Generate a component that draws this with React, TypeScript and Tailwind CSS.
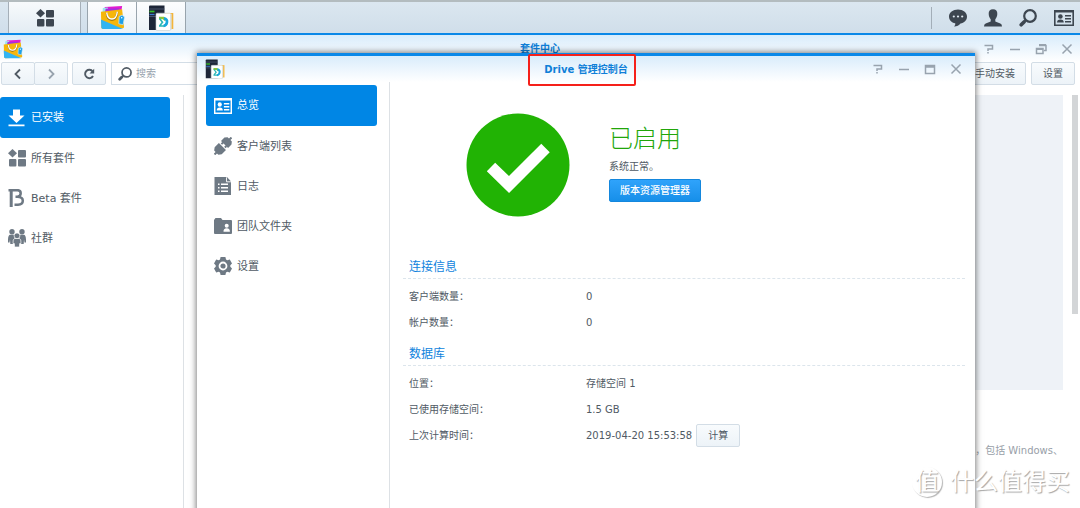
import type { ReactNode } from "react";

type IconProps = { className?: string };

const GridIcon = ({ className }: IconProps) => (
  <svg viewBox="0 0 18 18" className={className} fill="currentColor">
    <path d="M4.500 0 9 4.300 4.500 8.600 0 4.300z" />
    <rect x="10" y="1" width="8" height="7.400" rx="1" />
    <rect x="1" y="10" width="7.400" height="7.600" rx="1" />
    <rect x="10" y="10" width="8" height="7.600" rx="1" />
  </svg>
);

const BagIcon = ({ className }: IconProps) => (
  <svg viewBox="0 0 26 26" className={className}>
    <path d="M5 2 23 1 22 8 4 8z" fill="#e21bd0" />
    <path d="M3 3 8 2.500 9 8 2.500 8z" fill="#9be4ee" />
    <path d="M6 4 20 3.500 20 8 5 8z" fill="#a32fe0" />
    <path d="M1 7 23 4.500 25 22.500 Q25 24 23.500 24.200L3 25Q1.500 25 1.400 23.500z" fill="#f6b60c" />
    <path d="M1 15 24 25H3Q1.500 25 1.400 23.500z" fill="#32b4f2" />
    <path d="M7 8.500C8 18 17 18 18 7.500" fill="none" stroke="#8d6b10" strokeWidth="2" />
    <path d="M7 8C8 17 17 17 18 7" fill="none" stroke="#fff" strokeWidth="1.500" />
    <path d="m20 12 3-1.500 2.500 2-1.500 8-4.500-1z" fill="#1d9fe8" stroke="#c9efff" strokeWidth=".7" />
    <circle cx="22.600" cy="13.200" r=".8" fill="#fff" />
  </svg>
);

const DriveIcon = ({ className }: IconProps) => (
  <svg viewBox="0 0 26 26" className={className}>
    <path d="M1 1.500Q1 .5 2 .5H16.500V25H1z" fill="#1d2638" />
    <path d="M1 4H16.500M1 11.500H16.500" stroke="#54617a" strokeWidth=".8" />
    <path d="M1.500 6.500h5" stroke="#37c32b" strokeWidth="1.700" />
    <path d="M1.500 9.500h5" stroke="#3c7ccf" strokeWidth="1.200" />
    <path d="M17 8h8.300v16H17z" fill="#f3b53b" />
    <path d="M15 8.800h8.600V25H15z" fill="#dfe8e6" />
    <rect x="8" y="8.200" width="14.600" height="17.300" rx="1" fill="#fff" stroke="#c3cdd2" strokeWidth=".6" />
    <path d="M11 13h4.500l2 2" fill="none" stroke="#8cc63c" strokeWidth="2.600" />
    <path d="M16 13.200Q19.500 14 19 17.300T15.500 21" fill="none" stroke="#17a7dc" strokeWidth="2.600" />
    <path d="M11 21h5M11.500 13.500 14.500 17.200 11.500 21" fill="none" stroke="#29b7b5" strokeWidth="1.600" />
  </svg>
);

const ChatIcon = ({ className }: IconProps) => (
  <svg viewBox="0 0 18 18" className={className} fill="currentColor">
    <path d="M9 .5c5 0 9 3 9 7s-3 6.500-6.500 7c-1.500 2-3.500 3-6.500 3 1-1 1.500-2 1.200-3.200C2.500 13.500 0 11 0 7.500c0-4 4-7 9-7z" />
    <g fill="#dfe9f1">
      <circle cx="4.800" cy="7.500" r="1.100" />
      <circle cx="9" cy="7.500" r="1.100" />
      <circle cx="13.200" cy="7.500" r="1.100" />
    </g>
  </svg>
);

const UserIcon = ({ className }: IconProps) => (
  <svg viewBox="0 0 18 18" className={className} fill="currentColor">
    <path d="M9 .3c3 0 4.500 2 4.300 4.800-.1 2.300-1 4.200-2 5.200v2.200l5 2Q18 15 18 17.500H0Q0 15 1.700 14.500l5-2v-2.200c-1-1-1.900-2.900-2-5.200C4.500 2.300 6 .3 9 .3z" />
  </svg>
);

const SearchIcon = ({ className }: IconProps) => (
  <svg viewBox="0 0 18 18" className={className} fill="none" stroke="currentColor">
    <circle cx="11" cy="7" r="5.800" strokeWidth="2.200" />
    <path d="m6.800 11.200-1.500 1.500" strokeWidth="2" />
    <path d="m5 13-2.800 2.800" strokeWidth="3.600" strokeLinecap="round" />
  </svg>
);

const CardIcon = ({ className }: IconProps) => (
  <svg viewBox="0 0 20 18" preserveAspectRatio="none" className={className} fill="currentColor">
    <path fillRule="evenodd" d="M0 1h20v16H0zM1.600 3.600v11.800h16.800V3.600z" />
    <circle cx="6.400" cy="7.500" r="2.300" />
    <path d="M3 13.500q0-3 3.400-3t3.400 3zM11 6h6v1.600h-6zM11 9h6v1.600h-6zM11 12h6v1.600h-6z" />
  </svg>
);

const DownloadIcon = ({ className }: IconProps) => (
  <svg viewBox="0 0 18 18" className={className} fill="currentColor">
    <path d="M5 .5h7v6h4.500l-8 7.500-8-7.500H5zM.5 15.500H16.500v1.700H.5z" />
  </svg>
);

const BetaIcon = ({ className }: IconProps) => (
  <svg viewBox="0 0 18 18" className={className} fill="none" stroke="currentColor">
    <path d="M3.200 0V18" strokeWidth="3" />
    <path d="M.5 1.200H9.500Q12.700 1.200 12.700 4.200T9.500 7.800H7.500M9.500 7.800Q14.800 8 14.800 11.800T10 15.800H6.500" strokeWidth="2.500" />
  </svg>
);

const PeopleIcon = ({ className }: IconProps) => (
  <svg viewBox="0 0 18 18" className={className} fill="currentColor">
    <circle cx="4" cy="2.800" r="2.700" />
    <circle cx="14" cy="2.800" r="2.700" />
    <path d="M1.800 5.800h5l1 2L6 10.500 5.500 15H2.300L2 10.500 1.500 13.500H0Q-.3 6.500 1.800 5.800z" />
    <path d="M16.200 5.800h-5l-1 2L12 10.500l.5 4.500h3.200l.3-4.500.5 3H18Q18.300 6.500 16.200 5.800z" />
    <circle cx="9" cy="6.800" r="2.900" stroke="#fff" strokeWidth=".7" />
    <path d="M6.500 9.500h5Q13.300 10 13 14.500H11.700L11.400 18H6.600L6.300 14.500H5Q4.700 10 6.500 9.500z" stroke="#fff" strokeWidth=".7" />
  </svg>
);

const PlugIcon = ({ className }: IconProps) => (
  <svg viewBox="0 0 18 18" className={className} fill="currentColor">
    <g transform="rotate(45 9 9)">
      <path d="M8-3h2V-.5h2L14 2v4.800H4V2L6-.5h2z" />
      <path d="M5.600 6.500h2v2.300h-2zM10.400 6.500h2v2.300h-2z" />
      <path d="M4 9.800h10v6L12 18.500h-2V21H8v-2.500H6l-2-2.700z" />
    </g>
  </svg>
);

const LogIcon = ({ className }: IconProps) => (
  <svg viewBox="0 0 18 18" className={className}>
    <path d="M.5 0h12.500L17 4.500V18H.5z" fill="currentColor" />
    <path d="M12.500 .3V4.800H17" fill="none" stroke="#fff" strokeWidth=".9" />
    <path d="M4 7.200h1.500M4 10.700h1.500M4 14.200h1.500M7 7.200h7M7 10.700h7M7 14.200h7" stroke="#fff" strokeWidth="1.500" />
  </svg>
);

const TeamFolderIcon = ({ className }: IconProps) => (
  <svg viewBox="0 0 18 18" className={className}>
    <path d="M0 3 1.500 1H7l1.500 2H17q1 0 1 1v12q0 1-1 1H1q-1 0-1-1z" fill="currentColor" />
    <circle cx="12.700" cy="8.700" r="2" fill="#fff" />
    <path d="M9.500 14.800q-.2-3.500 3.200-3.500t3.200 3.500z" fill="#fff" />
  </svg>
);

const GearIcon = ({ className }: IconProps) => (
  <svg viewBox="0 0 18 18" className={className}>
    <path
      d="M6.600 0h4.800l.6 2.500 1.300.8 2.500-.8L18 6.600 16.300 8.300v1.400L18 11.400l-2.200 4.100-2.500-.8-1.300.8-.6 2.500H6.600L6 15.500l-1.300-.8-2.500.8L0 11.400 1.700 9.700V8.300L0 6.600 2.200 2.500l2.500.8L6 2.500z"
      fill="currentColor"
    />
    <circle cx="9" cy="9" r="3.500" fill="none" stroke="#fff" strokeWidth="1.800" />
  </svg>
);

const RefreshIcon = ({ className }: IconProps) => (
  <svg viewBox="0 0 12 12" className={className}>
    <path d="M9.700 3.500A4.200 4.200 0 1 0 10 8" fill="none" stroke="currentColor" strokeWidth="1.900" />
    <path d="M11.200 .8v4.700H6.500z" fill="currentColor" />
  </svg>
);

const ChevronIcon = ({ d, className }: { d: string; className?: string }) => (
  <svg viewBox="0 0 12 12" className={className} fill="none" stroke="currentColor" strokeWidth="1.800">
    <path d={d} />
  </svg>
);

const controls = [
  { label: "帮助", d: "M1.500 2.500H9.500V6H5V8M5 9V10.500" },
  { label: "最小化", d: "M1 6.500H11" },
];
const restore = { label: "还原", d: "M4 2.500H11V7.500H9M1.500 5.500H8V10.500H1.500zM4 1.800H11M1.500 6.200H8" };
const maximize = { label: "最大化", d: "M1.500 2.500H10.500V10.500H1.500zM1.500 4H10.500" };
const close = { label: "关闭", d: "M1.500 1.500 10.500 10.500M10.500 1.500 1.500 10.500" };

function WindowControls({ middle }: { middle: typeof restore }) {
  return (
    <div className="flex gap-3.5 text-[#98a3ae]">
      {[...controls, middle, close].map((c) => (
        <button key={c.label} aria-label={c.label} className="h-3 w-3">
          <svg viewBox="0 0 12 12" className="h-3 w-3" fill="none" stroke="currentColor" strokeWidth="1.500">
            <path d={c.d} />
          </svg>
        </button>
      ))}
    </div>
  );
}

type Item = { label: string; icon: (p: IconProps) => ReactNode };

const packageNav: Item[] = [
  { label: "已安装", icon: DownloadIcon },
  { label: "所有套件", icon: GridIcon },
  { label: "Beta 套件", icon: BetaIcon },
  { label: "社群", icon: PeopleIcon },
];

const driveNav: Item[] = [
  { label: "总览", icon: CardIcon },
  { label: "客户端列表", icon: PlugIcon },
  { label: "日志", icon: LogIcon },
  { label: "团队文件夹", icon: TeamFolderIcon },
  { label: "设置", icon: GearIcon },
];

function SideNav({ items }: { items: Item[] }) {
  return (
    <nav className="flex flex-col">
      {items.map((item, i) => (
        <button
          key={item.label}
          className={`flex w-full items-center gap-[5px] rounded-[3px] pl-2 text-left text-[11px] ${
            i === 0 ? "h-[41px] bg-[#0086e5] text-white" : "h-10 text-[#505a64]"
          }`}
        >
          <item.icon className={`h-[18px] w-[18px] shrink-0 ${i === 0 ? "" : "text-[#6e7984]"}`} />
          <span className="pt-0.5">{item.label}</span>
        </button>
      ))}
    </nav>
  );
}

const btn = "flex h-[23px] items-center justify-center rounded-[2px] border border-[#d3dde6] bg-linear-to-b from-[#f8fbfd] to-[#edf3f8]";

function Section({ title, rows }: { title: string; rows: { label: string; value: ReactNode }[] }) {
  return (
    <section className="mb-2">
      <h2 className="border-b border-dashed border-[#dce5ec] px-1.5 text-[12px] leading-[22px] text-[#0f83dd]">{title}</h2>
      <dl className="pt-1">
        {rows.map((r) => (
          <div key={r.label} className="flex h-[26px] items-center px-1.5">
            <dt className="w-[177px] shrink-0">{r.label}</dt>
            <dd className="flex items-center gap-1">{r.value}</dd>
          </div>
        ))}
      </dl>
    </section>
  );
}

function Taskbar() {
  return (
    <header className="flex h-[33px] border-t-2 border-[#b3bcbf] bg-linear-to-b from-[#dbe7f0] to-[#d0deea] text-[#3d4650]">
      <button aria-label="主菜单" className="ml-2 flex w-[73px] items-center justify-center border-x border-[#a5afb8] bg-linear-to-b from-[#f7fafc] to-[#e3ecf3]">
        <GridIcon className="h-[18px] w-[18px]" />
      </button>
      <button aria-label="套件中心" className="ml-1.5 flex w-[50px] items-center justify-center border-x border-[#98a4ad] bg-linear-to-b from-[#fcfdfe] to-[#ebf2f7]">
        <BagIcon className="h-[25px] w-[25px]" />
      </button>
      <button aria-label="Drive" className="flex w-[49px] items-center justify-center border-r border-[#98a4ad] bg-linear-to-b from-[#fcfdfe] to-[#ebf2f7]">
        <DriveIcon className="h-[26px] w-[26px]" />
      </button>
      <div className="ml-auto flex items-center gap-[17px] pr-1.5">
        <span className="h-[22px] w-px bg-[#a3aeb8]" />
        <button aria-label="聊天"><ChatIcon className="h-[18px] w-[18px]" /></button>
        <button aria-label="用户"><UserIcon className="h-[18px] w-[18px]" /></button>
        <button aria-label="搜索"><SearchIcon className="h-[18px] w-[18px]" /></button>
        <button aria-label="小工具"><CardIcon className="h-[18px] w-5" /></button>
      </div>
    </header>
  );
}

function PackageCenter() {
  return (
    <main className="flex flex-1 flex-col border-t-2 border-[#0a88e8] bg-white">
      <div className="grid h-[27px] grid-cols-[1fr_auto_1fr] items-center bg-linear-to-b from-[#d9ecfb] to-white px-[3px]">
        <BagIcon className="h-5 w-5" />
        <h1 className="text-[10px] font-bold text-[#0f7fd8]">套件中心</h1>
        <div className="justify-self-end pr-1">
          <WindowControls middle={restore} />
        </div>
      </div>
      <div className="flex pr-[5px] pl-px text-[10px]">
        <button aria-label="后退" className={`${btn} w-[34px]`}>
          <ChevronIcon d="M8 1.500 3.500 6 8 10.500" className="h-3 w-3" />
        </button>
        <button aria-label="前进" className={`${btn} -ml-px w-[34px] text-[#98a3ae]`}>
          <ChevronIcon d="M4 1.500 8.500 6 4 10.500" className="h-3 w-3" />
        </button>
        <button aria-label="刷新" className={`${btn} ml-1 w-[34px]`}>
          <RefreshIcon className="h-3 w-3" />
        </button>
        <div className="ml-[5px] flex h-[23px] w-44 items-center gap-1 border border-[#d3dde6] bg-white pl-1.5">
          <SearchIcon className="h-3.5 w-3.5 shrink-0" />
          <input aria-label="搜索" placeholder="搜索" className="w-full min-w-0 outline-none placeholder:text-[#98a3ae]" />
        </div>
        <button className={`${btn} ml-auto w-[62px]`}>手动安装</button>
        <button className={`${btn} ml-[5px] w-11`}>设置</button>
      </div>
      <div className="flex flex-1 pt-2.5">
        <aside className="w-[184px] border-r border-[#dde1e5] pt-0.5 pr-[13px]">
          <SideNav items={packageNav} />
        </aside>
        <div className="flex min-w-0 flex-1 flex-col pl-4">
          <div className="h-[295px] bg-[#eef2f7]" />
          <p className="mt-[53px] text-right text-[10px] leading-4 text-[#98a0a8]">在任何设备上访问和同步您的内容，包括 Windows、</p>
        </div>
        <div className="mr-0.5 ml-[9px] h-[219px] w-1.5 bg-[#d3d5d7]" />
      </div>
    </main>
  );
}

function DriveConsole() {
  return (
    <div
      role="dialog"
      aria-label="Drive 管理控制台"
      className="absolute top-[53px] right-[105px] -bottom-2 left-[197px] flex flex-col border-t-[3px] border-[#0a88e8] bg-white shadow-[0_0_6px_1px_rgba(0,0,0,0.5)]"
    >
      <div className="grid h-[26px] grid-cols-[1fr_auto_1fr] items-center bg-linear-to-b from-[#d9ecfb] to-white px-2">
        <DriveIcon className="h-5 w-5" />
        <h1 className="text-[10px] font-bold text-[#0f7fd8]">Drive 管理控制台</h1>
        <div className="justify-self-end pr-[5px]">
          <WindowControls middle={maximize} />
        </div>
      </div>
      <div className="flex flex-1">
        <aside className="w-[193px] border-r border-[#dde1e5] pt-[3px] pr-3 pl-[9px]">
          <SideNav items={driveNav} />
        </aside>
        <div className="min-w-0 flex-1 pr-2.5 pl-[13px] text-[10px]">
          <div className="flex gap-[39px] pt-[31px] pb-[39px] pl-[63px]">
            <svg viewBox="0 0 104 104" className="h-26 w-26 shrink-0">
              <circle cx="52" cy="52" r="51.500" fill="#21b304" />
              <path d="M25 54 43 71.500 79.500 35" fill="none" stroke="#fff" strokeWidth="12" />
            </svg>
            <div className="flex flex-col items-start pt-2">
              <p className="text-[24px] leading-9 font-light text-[#21a60a]">已启用</p>
              <p className="leading-5">系统正常。</p>
              <button className="mt-0.5 h-[23px] w-[92px] rounded-[2px] border border-[#1487dd] bg-linear-to-b from-[#2fa3fb] to-[#168fe9] font-medium text-white">
                版本资源管理器
              </button>
            </div>
          </div>
          <Section
            title="连接信息"
            rows={[
              { label: "客户端数量：", value: "0" },
              { label: "帐户数量：", value: "0" },
            ]}
          />
          <Section
            title="数据库"
            rows={[
              { label: "位置：", value: "存储空间 1" },
              { label: "已使用存储空间：", value: "1.5 GB" },
              {
                label: "上次计算时间：",
                value: (
                  <>
                    2019-04-20 15:53:58
                    <button className={`${btn} w-11`}>计算</button>
                  </>
                ),
              },
            ]}
          />
        </div>
      </div>
      {/* red frame around the title */}
      <div className="pointer-events-none absolute -top-0.5 left-1/2 h-8 w-27 -translate-x-[58px] rounded-[2px] border-2 border-[#f5201a]" />
    </div>
  );
}

export default function App() {
  return (
    <div className="relative flex min-h-screen flex-col overflow-hidden bg-white font-['DejaVu_Sans','Noto_Sans_CJK_SC',sans-serif] text-[#505a64]">
      <Taskbar />
      <PackageCenter />
      <DriveConsole />
      <div className="absolute right-2.5 bottom-2.5 flex items-center gap-2 text-white [text-shadow:1px_1px_1px_#a6a6a6]">
        <span className="flex h-[30px] w-[30px] items-center justify-center rounded-full text-[24px] shadow-[1px_1px_1px_#b5b5b5]">值</span>
        <span className="text-[24px] leading-8">什么值得买</span>
      </div>
    </div>
  );
}
